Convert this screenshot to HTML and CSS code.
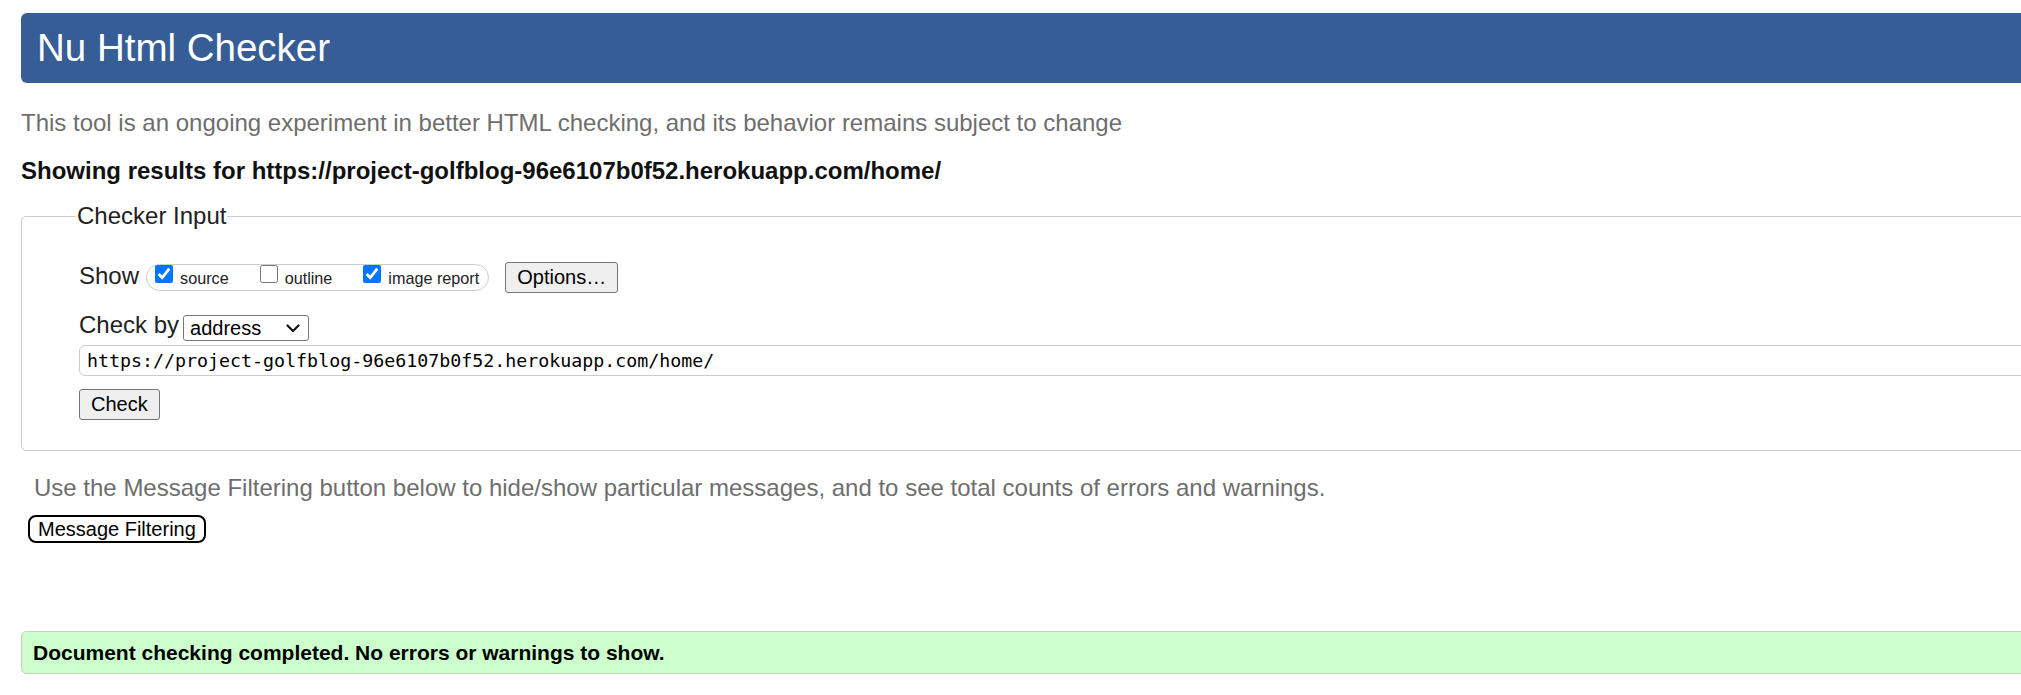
FILE: index.html
```html
<!DOCTYPE html>
<html lang="en">
<head>
<meta charset="utf-8">
<title>Nu Html Checker</title>
<link rel="stylesheet" href="styles.css">
</head>
<body>
<div class="page">
  <h1 class="title">Nu Html Checker</h1>
  <p class="intro">This tool is an ongoing experiment in better HTML checking, and its behavior remains subject to change</p>
  <p class="results">Showing results for https://project-golfblog-96e6107b0f52.herokuapp.com/home/</p>
  <form class="checker">
    <fieldset class="input-box">
      <legend class="legend">Checker Input</legend>
      <div class="show-row">
        <span class="show-label">Show</span>
        <span class="pill">
          <label class="opt"><input class="cb" type="checkbox" checked><span class="opt-text">source</span></label>
          <label class="opt"><input class="cb" type="checkbox"><span class="opt-text">outline</span></label>
          <label class="opt opt-last"><input class="cb" type="checkbox" checked><span class="opt-text">image report</span></label>
        </span>
        <button type="button" class="btn btn-options">Options…</button>
      </div>
      <div class="by-row">
        <span class="by-label">Check by</span>
        <span class="select-wrap">
          <select class="by-select"><option>address</option><option>file upload</option><option>text input</option></select>
          <svg class="chev" width="14" height="9" viewBox="0 0 14 9" aria-hidden="true"><polyline points="1.5,1.5 7,7 12.5,1.5" fill="none" stroke="#111" stroke-width="2.2" stroke-linecap="round" stroke-linejoin="round"/></svg>
        </span>
      </div>
      <input class="url" type="url" value="https://project-golfblog-96e6107b0f52.herokuapp.com/home/">
      <div class="check-row"><button type="button" class="btn btn-check">Check</button></div>
    </fieldset>
  </form>
  <p class="hint">Use the Message Filtering button below to hide/show particular messages, and to see total counts of errors and warnings.</p>
  <div class="filter-row"><button type="button" class="btn-filter">Message Filtering</button></div>
  <p class="success">Document checking completed. No errors or warnings to show.</p>
</div>
</body>
</html>
```

FILE: styles.css
```css
html {
  overflow: hidden;
  background: #ffffff;
}

body {
  margin: 0;
  font-family: "Liberation Sans", Arial, sans-serif;
  color: #222222;
}

.page {
  width: 2200px;
  padding: 13px 0 0 21px;
}

.title {
  margin: 0;
  padding: 14px 16px;
  background: #365d95;
  color: #ffffff;
  font-size: 38.5px;
  line-height: 42px;
  font-weight: normal;
  border-radius: 6px;
}

.intro {
  margin: 26px 0 0;
  font-size: 24px;
  line-height: 28px;
  color: #6e6e6e;
}

.results {
  margin: 20px 0 0;
  font-size: 24px;
  line-height: 28px;
  font-weight: bold;
  color: #111111;
}

.checker {
  margin: 0;
}

.input-box {
  margin: 17px 0 0;
  padding: 0 0 30px 57px;
  border: 1px solid #cccccc;
  border-radius: 5px;
  min-width: 0;
}

.legend {
  margin-left: -3px;
  padding: 0 1px;
  font-size: 24px;
  line-height: 28px;
  color: #222222;
}

.show-row {
  display: flex;
  align-items: flex-start;
  margin-top: 32px;
}

.show-label {
  font-size: 24px;
  line-height: 28px;
  margin-right: 7px;
}

.pill {
  display: inline-flex;
  align-items: flex-start;
  box-sizing: border-box;
  height: 27px;
  margin-top: 2px;
  padding: 0 9px 0 8px;
  border: 1px solid #cccccc;
  border-radius: 14px;
}

.opt {
  display: inline-flex;
  align-items: flex-start;
  margin-right: 31px;
}

.opt-last {
  margin-right: 0;
}

.cb {
  width: 18px;
  height: 18px;
  margin: 0 7px 0 0;
}

.opt-text {
  margin-top: 3px;
  font-size: 16.2px;
  line-height: 20px;
  color: #222222;
}

.btn {
  box-sizing: border-box;
  height: 31px;
  font-family: "Liberation Sans", Arial, sans-serif;
  font-size: 20px;
  line-height: 23px;
  color: #000000;
  background: #efefef;
  border: 1px solid #767676;
  border-radius: 3px;
  padding: 0 11px;
}

.btn-options {
  margin-left: 16px;
}

.by-row {
  display: flex;
  align-items: flex-start;
  margin-top: 18px;
}

.by-label {
  font-size: 24px;
  line-height: 28px;
  margin-right: 4px;
}

.select-wrap {
  position: relative;
  display: inline-block;
  margin-top: 4px;
}

.by-select {
  display: block;
  box-sizing: border-box;
  width: 126px;
  height: 26px;
  margin: 0;
  padding: 0 0 0 6px;
  font-family: "Liberation Sans", Arial, sans-serif;
  font-size: 20px;
  line-height: 23px;
  color: #000000;
  background: #ffffff;
  border: 1px solid #767676;
  border-radius: 3px;
  appearance: none;
  -webkit-appearance: none;
}

.chev {
  position: absolute;
  right: 9px;
  top: 9px;
  pointer-events: none;
}

.url {
  display: block;
  box-sizing: border-box;
  width: 100%;
  height: 31px;
  margin-top: 4px;
  padding: 0 7px;
  font-family: "DejaVu Sans Mono", "Liberation Mono", monospace;
  font-size: 18.3px;
  color: #000000;
  border: 1px solid #cccccc;
  border-radius: 6px;
}

.check-row {
  margin-top: 13px;
}

.btn-check {
  padding: 0 11px;
}

.hint {
  margin: 23px 0 0 13px;
  font-size: 24px;
  line-height: 28px;
  color: #6e6e6e;
}

.filter-row {
  margin: 13px 0 0 7px;
}

.btn-filter {
  box-sizing: border-box;
  height: 28px;
  padding: 0 8px;
  font-family: "Liberation Sans", Arial, sans-serif;
  font-size: 20px;
  line-height: 22px;
  color: #000000;
  background: #ffffff;
  border: 2px solid #000000;
  border-radius: 8px;
}

.success {
  margin: 88px 0 0;
  padding: 8px 11px;
  font-size: 21px;
  line-height: 25px;
  font-weight: bold;
  color: #000000;
  background: #ccffcc;
  border: 1px solid #cccccc;
  border-radius: 5px;
}
```
